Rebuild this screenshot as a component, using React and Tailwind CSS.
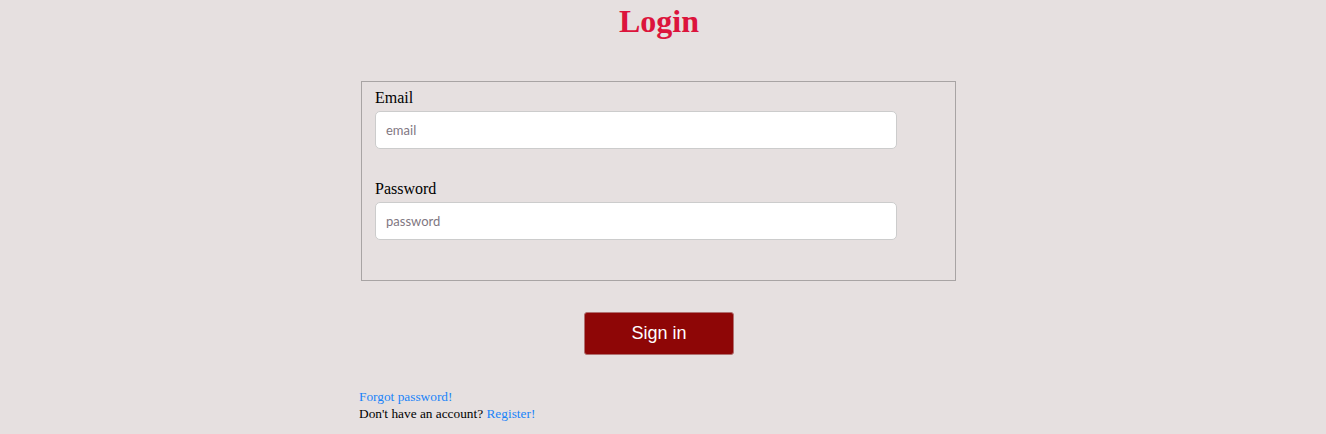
import React, { useState } from "react";

const App = () => {
  const [email, setEmail] = useState("");
  const [password, setPassword] = useState("");

  return (
    <div className="min-h-screen bg-[#e6e0e0] font-['Liberation_Serif',serif] text-black">
      <div className="w-[600px] ml-[359px]">
        {/* Title */}
        <h1 className="pt-[3px] text-center text-[32px] leading-[37px] font-bold text-[#dc143c]">
          Login
        </h1>

        {/* Form box */}
        <div className="mt-[41px] mx-[2px] w-[595px] border border-[#a8a4a4] pt-[7px] pb-[40px] pl-[13px]">
          <label className="block text-[16px] leading-[18px] mb-[4px]">Email</label>
          <input
            type="text"
            placeholder="email"
            value={email}
            onChange={(e) => setEmail(e.target.value)}
            className="block w-[522px] h-[38px] bg-white border border-[#cccccc] rounded-[5px] pl-[10px] text-[13px] font-['Lato',sans-serif] placeholder:text-[#7f7782] focus:outline-none"
          />

          <label className="block text-[16px] leading-[18px] mt-[31px] mb-[4px]">Password</label>
          <input
            type="password"
            placeholder="password"
            value={password}
            onChange={(e) => setPassword(e.target.value)}
            className="block w-[522px] h-[38px] bg-white border border-[#cccccc] rounded-[5px] pl-[10px] text-[13px] font-['Lato',sans-serif] placeholder:text-[#7f7782] focus:outline-none"
          />
        </div>

        {/* Button */}
        <div className="flex justify-center mt-[31px]">
          <button className="w-[150px] h-[43px] bg-[#8e0606] border border-[#b07070] rounded-[3px] text-white text-[18px] font-['Liberation_Sans',sans-serif]">
            Sign in
          </button>
        </div>

        {/* Links */}
        <div className="mt-[33px] text-[13.33px] leading-[17px]">
          <a href="#" className="block text-[#1a84f8]">Forgot password!</a>
          <p>
            Don't have an account? <a href="#" className="text-[#1a84f8]">Register!</a>
          </p>
        </div>
      </div>
    </div>
  );
};

export default App;
